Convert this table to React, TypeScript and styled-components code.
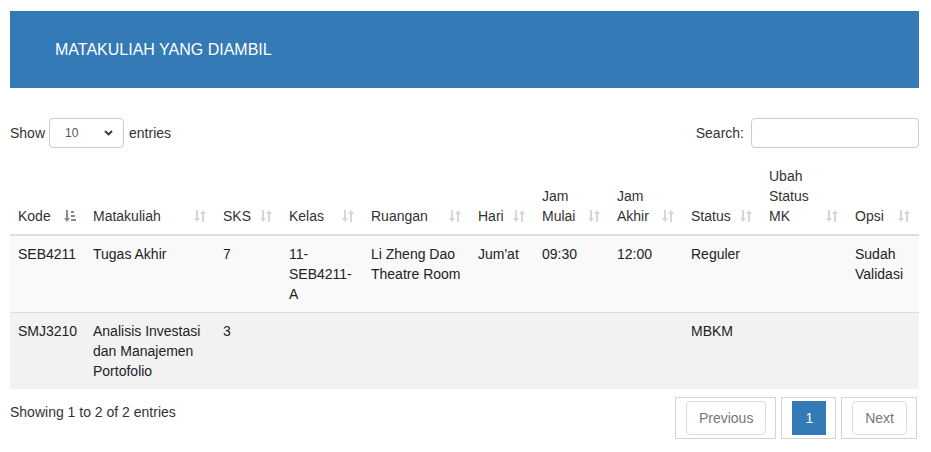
import React from "react";
import styled, { createGlobalStyle } from "styled-components";

const Global = createGlobalStyle`
  html, body { margin: 0; padding: 0; background: #fff; }
  body {
    font-family: "Liberation Sans", Arial, Helvetica, sans-serif;
    font-size: 14px;
    line-height: 20px;
    color: #333;
  }
  * { box-sizing: border-box; }
`;

const Page = styled.div`
  padding: 11px 12px 0 10px;
`;

const Heading = styled.div`
  background: #337ab7;
  height: 77px;
  display: flex;
  align-items: center;
  padding: 0 0 0 45px;
  color: #fff;
  font-size: 16px;
`;

const Controls = styled.div`
  margin-top: 30px;
  display: flex;
  justify-content: space-between;
  align-items: center;
  height: 30px;
`;

const Label = styled.label`
  display: flex;
  align-items: center;
  gap: 4px;
  white-space: nowrap;
`;

const SelectBox = styled.div`
  position: relative;
  width: 75px;
  height: 30px;
  border: 1px solid #ccc;
  border-radius: 4px;
  display: flex;
  align-items: center;
  padding-left: 15px;
  font-size: 12px;
  color: #555;
  margin-right: 1px;
`;

const Chevron = styled.svg`
  position: absolute;
  right: 10px;
  top: 11px;
`;

const SearchInput = styled.input`
  width: 168px;
  height: 30px;
  border: 1px solid #ccc;
  border-radius: 4px;
  margin-left: 3px;
  font: inherit;
  outline: none;
`;

const Table = styled.table`
  margin-top: 10px;
  width: 909px;
  border-collapse: collapse;
  table-layout: fixed;
`;

const Th = styled.th<{ $w: number }>`
  position: relative;
  width: ${(p) => p.$w}px;
  text-align: left;
  font-weight: normal;
  vertical-align: bottom;
  padding: 8px 22px 8px 8px;
  border-bottom: 2px solid #ddd;
  color: #333;
`;

const SortIcon = styled.svg`
  position: absolute;
  right: 9px;
  bottom: 11px;
`;

const Tr = styled.tr<{ $bg: string }>`
  background: ${(p) => p.$bg};
`;

const Td = styled.td`
  vertical-align: top;
  padding: 8px;
  border-top: 1px solid #ddd;
  color: #222;
`;

const Footer = styled.div`
  display: flex;
  justify-content: space-between;
  align-items: flex-start;
  margin-top: 8px;
`;

const Info = styled.div`
  margin-top: 5px;
`;

const Pager = styled.div`
  display: flex;
  gap: 5px;
  margin-right: 2px;
`;

const PageBox = styled.div`
  border: 1px solid #d4d4d4;
  padding: 3px 9px 3px 10px;
`;

const PageBtn = styled.span<{ $active?: boolean }>`
  display: block;
  padding: 6px 12px;
  line-height: 20px;
  border: 1px solid ${(p) => (p.$active ? "#337ab7" : "#ddd")};
  border-radius: ${(p) => (p.$active ? "0" : "4px")};
  background: ${(p) => (p.$active ? "#337ab7" : "#fff")};
  color: ${(p) => (p.$active ? "#fff" : "#777")};
`;

const Unsorted = () => (
  <SortIcon width="12" height="14" viewBox="0 0 12 14">
    <g fill="#d6d6d6">
      <rect x="2" y="1" width="2" height="9" />
      <polygon points="0,9 6,9 3,13" />
      <rect x="8" y="4" width="2" height="9" />
      <polygon points="6,5 12,5 9,1" />
    </g>
  </SortIcon>
);

const SortedAsc = () => (
  <SortIcon width="12" height="14" viewBox="0 0 12 14">
    <g fill="#8a8a8a">
      <rect x="2" y="1" width="2" height="9" />
      <polygon points="0,9 6,9 3,13" />
      <rect x="7" y="2" width="3" height="2" />
      <rect x="7" y="6" width="4" height="2" />
      <rect x="7" y="10" width="5" height="2" />
    </g>
  </SortIcon>
);

const cols: { label: React.ReactNode; w: number; active?: boolean }[] = [
  { label: "Kode", w: 75, active: true },
  { label: "Matakuliah", w: 130 },
  { label: "SKS", w: 66 },
  { label: "Kelas", w: 82 },
  { label: "Ruangan", w: 107 },
  { label: "Hari", w: 64 },
  { label: "Jam Mulai", w: 75 },
  { label: "Jam Akhir", w: 74 },
  { label: "Status", w: 78 },
  { label: "Ubah Status MK", w: 86 },
  { label: "Opsi", w: 72 },
];

const rows: string[][] = [
  ["SEB4211", "Tugas Akhir", "7", "11-SEB4211-A", "Li Zheng Dao Theatre Room", "Jum'at", "09:30", "12:00", "Reguler", "", "Sudah Validasi"],
  ["SMJ3210", "Analisis Investasi dan Manajemen Portofolio", "3", "", "", "", "", "", "MBKM", "", ""],
];

export default function App() {
  return (
    <Page>
      <Global />
      <Heading>MATAKULIAH YANG DIAMBIL</Heading>
      <Controls>
        <Label>
          Show
          <SelectBox>
            10
            <Chevron width="9" height="6" viewBox="0 0 9 6">
              <path d="M1 1 L4.5 4.5 L8 1" stroke="#333" strokeWidth="1.8" fill="none" />
            </Chevron>
          </SelectBox>
          entries
        </Label>
        <Label>
          Search:
          <SearchInput type="search" />
        </Label>
      </Controls>
      <Table>
        <thead>
          <tr>
            {cols.map((c, i) => (
              <Th key={i} $w={c.w}>
                {c.label}
                {c.active ? <SortedAsc /> : <Unsorted />}
              </Th>
            ))}
          </tr>
        </thead>
        <tbody>
          {rows.map((r, i) => (
            <Tr key={i} $bg={i % 2 === 0 ? "#f9f9f9" : "#f2f2f2"}>
              {r.map((v, j) => (
                <Td key={j}>{v}</Td>
              ))}
            </Tr>
          ))}
        </tbody>
      </Table>
      <Footer>
        <Info>Showing 1 to 2 of 2 entries</Info>
        <Pager>
          <PageBox>
            <PageBtn>Previous</PageBtn>
          </PageBox>
          <PageBox>
            <PageBtn $active>1</PageBtn>
          </PageBox>
          <PageBox>
            <PageBtn>Next</PageBtn>
          </PageBox>
        </Pager>
      </Footer>
    </Page>
  );
}
